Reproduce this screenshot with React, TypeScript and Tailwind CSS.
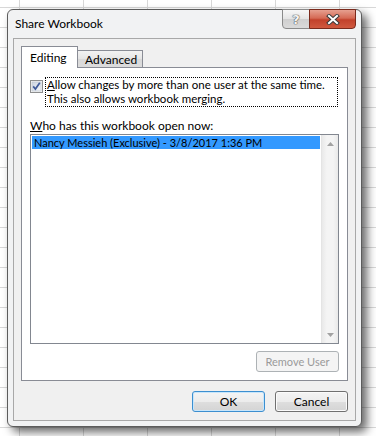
function CloseGlyph() {
  return (
    <svg width="14" height="11" viewBox="0 0 14 11">
      <path d="M3 2 L11 9 M11 2 L3 9" stroke="#3a3a3a" strokeWidth="4" strokeLinecap="square" />
      <path d="M3 2 L11 9 M11 2 L3 9" stroke="#ffffff" strokeWidth="2" strokeLinecap="square" />
    </svg>
  );
}

function TitleBar() {
  return (
    <div className="flex h-[28px] items-start">
      <div className="ml-[2px] pt-[6px] text-[12px] leading-[16px] text-black">Share Workbook</div>
      <div className="-mt-px ml-auto flex">
        <div className="flex h-[20px] w-[28px] items-center justify-center rounded-bl-[4px] border border-[#8a8a8a] bg-[linear-gradient(to_bottom,#f7f7f7,#e4e4e4_50%,#cfcfcf_51%,#dadada)]">
          <span className="font-['DejaVu_Sans',sans-serif] text-[13px] font-bold leading-none text-[#f4f4f4] [text-shadow:0_0_1px_#555,0_0_1px_#555,0_0_1px_#555]">
            ?
          </span>
        </div>
        <div className="-ml-px flex h-[20px] w-[47px] items-center justify-center rounded-br-[4px] border border-[#7a2a1c] bg-[linear-gradient(to_bottom,#e6a090,#d56a55_45%,#c2412b_55%,#d0593f)]">
          <CloseGlyph />
        </div>
      </div>
    </div>
  );
}

function Checkbox() {
  return (
    <svg width="13" height="13" viewBox="0 0 13 13" className="shrink-0">
      <defs>
        <linearGradient id="cb" x1="0" y1="0" x2="1" y2="1">
          <stop offset="0" stopColor="#cbd3e0" />
          <stop offset="1" stopColor="#f4f6f9" />
        </linearGradient>
      </defs>
      <rect x="0.5" y="0.5" width="12" height="12" fill="#f4f4f4" stroke="#8e8f8f" />
      <rect x="2" y="2" width="9" height="9" fill="url(#cb)" stroke="#b9c1cc" strokeWidth="0.6" />
      <path d="M3.2 6.4 L5.4 9 L9.8 2.8" fill="none" stroke="#3f5a9a" strokeWidth="1.7" />
    </svg>
  );
}

function ScrollArrow({ up }: { up?: boolean }) {
  return (
    <div className="flex h-[17px] items-center justify-center">
      <svg width="7" height="4" viewBox="0 0 7 4">
        <path d={up ? "M0 4 L3.5 0 L7 4 Z" : "M0 0 L3.5 4 L7 0 Z"} fill="#a2a2a2" />
      </svg>
    </div>
  );
}

function DialogButton({ label, primary }: { label: string; primary?: boolean }) {
  return (
    <div
      className={
        primary
          ? "flex h-[21px] w-[73px] items-center justify-center rounded-[3px] border border-[#3c8fd0] bg-[linear-gradient(to_bottom,#f4f4f4,#ececec_50%,#dedede_51%,#d4d4d4)] shadow-[inset_0_0_0_1px_#c8e6fb]"
          : "flex h-[21px] w-[73px] items-center justify-center rounded-[3px] border border-[#707070] bg-[linear-gradient(to_bottom,#f4f4f4,#ececec_50%,#dedede_51%,#d4d4d4)] shadow-[inset_0_0_0_1px_#fbfbfb]"
      }
    >
      {label}
    </div>
  );
}

export default function App() {
  return (
    <div className="h-[436px] w-[376px] overflow-hidden bg-white bg-[linear-gradient(to_right,#d8d8d8_1px,transparent_1px),linear-gradient(to_bottom,#d8d8d8_1px,transparent_1px)] bg-size-[64px_20px] bg-position-[19px_7px] pl-[7px] pt-[9px] font-['Lato',sans-serif] text-[12px] leading-[13px] text-black">
      <div className="flex h-[418px] w-[355px] flex-col rounded-[6px] border border-[#5c5c5c] bg-[#f1f2f3] px-[5px] pb-[5px] shadow-[5px_5px_10px_rgba(0,0,0,0.6)]">
        <TitleBar />
        <div className="flex flex-1 flex-col border border-[#a8a8a8] bg-[#f0f0f0] px-[7px] pb-[8px] pt-[7px]">
          <div className="flex h-[21px] items-end">
            <div className="relative z-10 -mb-px flex h-[22px] w-[57px] items-center border border-b-0 border-[#898c95] bg-white pl-[8px] pb-[1px]">
              Editing
            </div>
            <div className="-ml-px flex h-[17px] w-[66px] items-center border border-b-0 border-[#898c95] bg-[linear-gradient(to_bottom,#f2f2f2,#e5e5e5_50%,#d9d9d9_51%,#dcdcdc)] pl-[7px]">
              Advanced
            </div>
          </div>
          <div className="flex h-[314px] flex-col border border-[#898c95] bg-white pl-[8px] pr-[8px] pb-[8px]">
            <div className="mt-[9px] flex items-start">
              <div className="mt-[3px]">
                <Checkbox />
              </div>
              <div className="ml-[2px] w-[293px] border border-dotted border-black px-px py-0 text-[11.5px] whitespace-nowrap leading-[14px]">
                <div>
                  <u className="underline-offset-1">A</u>llow changes by more than one user at the same time.
                </div>
                <div>This also allows workbook merging.</div>
              </div>
            </div>
            <div className="mt-[12px] whitespace-nowrap text-[12px]">
              <u className="underline-offset-1">W</u>ho has this workbook open now:
            </div>
            <div className="mt-[2px] flex h-[211px] border border-[#828790] bg-white p-px">
              <div className="flex-1">
                <div className="h-[13px] bg-[#3399ff] pl-[2px] text-[11px] leading-[13px] whitespace-nowrap text-black">
                  Nancy Messieh (Exclusive) - 3/8/2017 1:36 PM
                </div>
              </div>
              <div className="-my-px -mr-px ml-px flex w-[17px] flex-col justify-between border-l border-[#e4e4e4] bg-[linear-gradient(to_right,#e9e9e9,#f4f4f4_30%,#f4f4f4_70%,#e9e9e9)]">
                <ScrollArrow up />
                <ScrollArrow />
              </div>
            </div>
            <div className="mt-[7px] flex justify-end">
              <div className="flex h-[21px] w-[83px] items-center justify-center rounded-[3px] border border-[#adb2b5] bg-[#f4f4f4] text-[11px] text-[#9a9a9a]">
                Remove User
              </div>
            </div>
          </div>
          <div className="mt-[10px] flex justify-end gap-[10px]">
            <DialogButton label="OK" primary />
            <DialogButton label="Cancel" />
          </div>
        </div>
      </div>
    </div>
  );
}
